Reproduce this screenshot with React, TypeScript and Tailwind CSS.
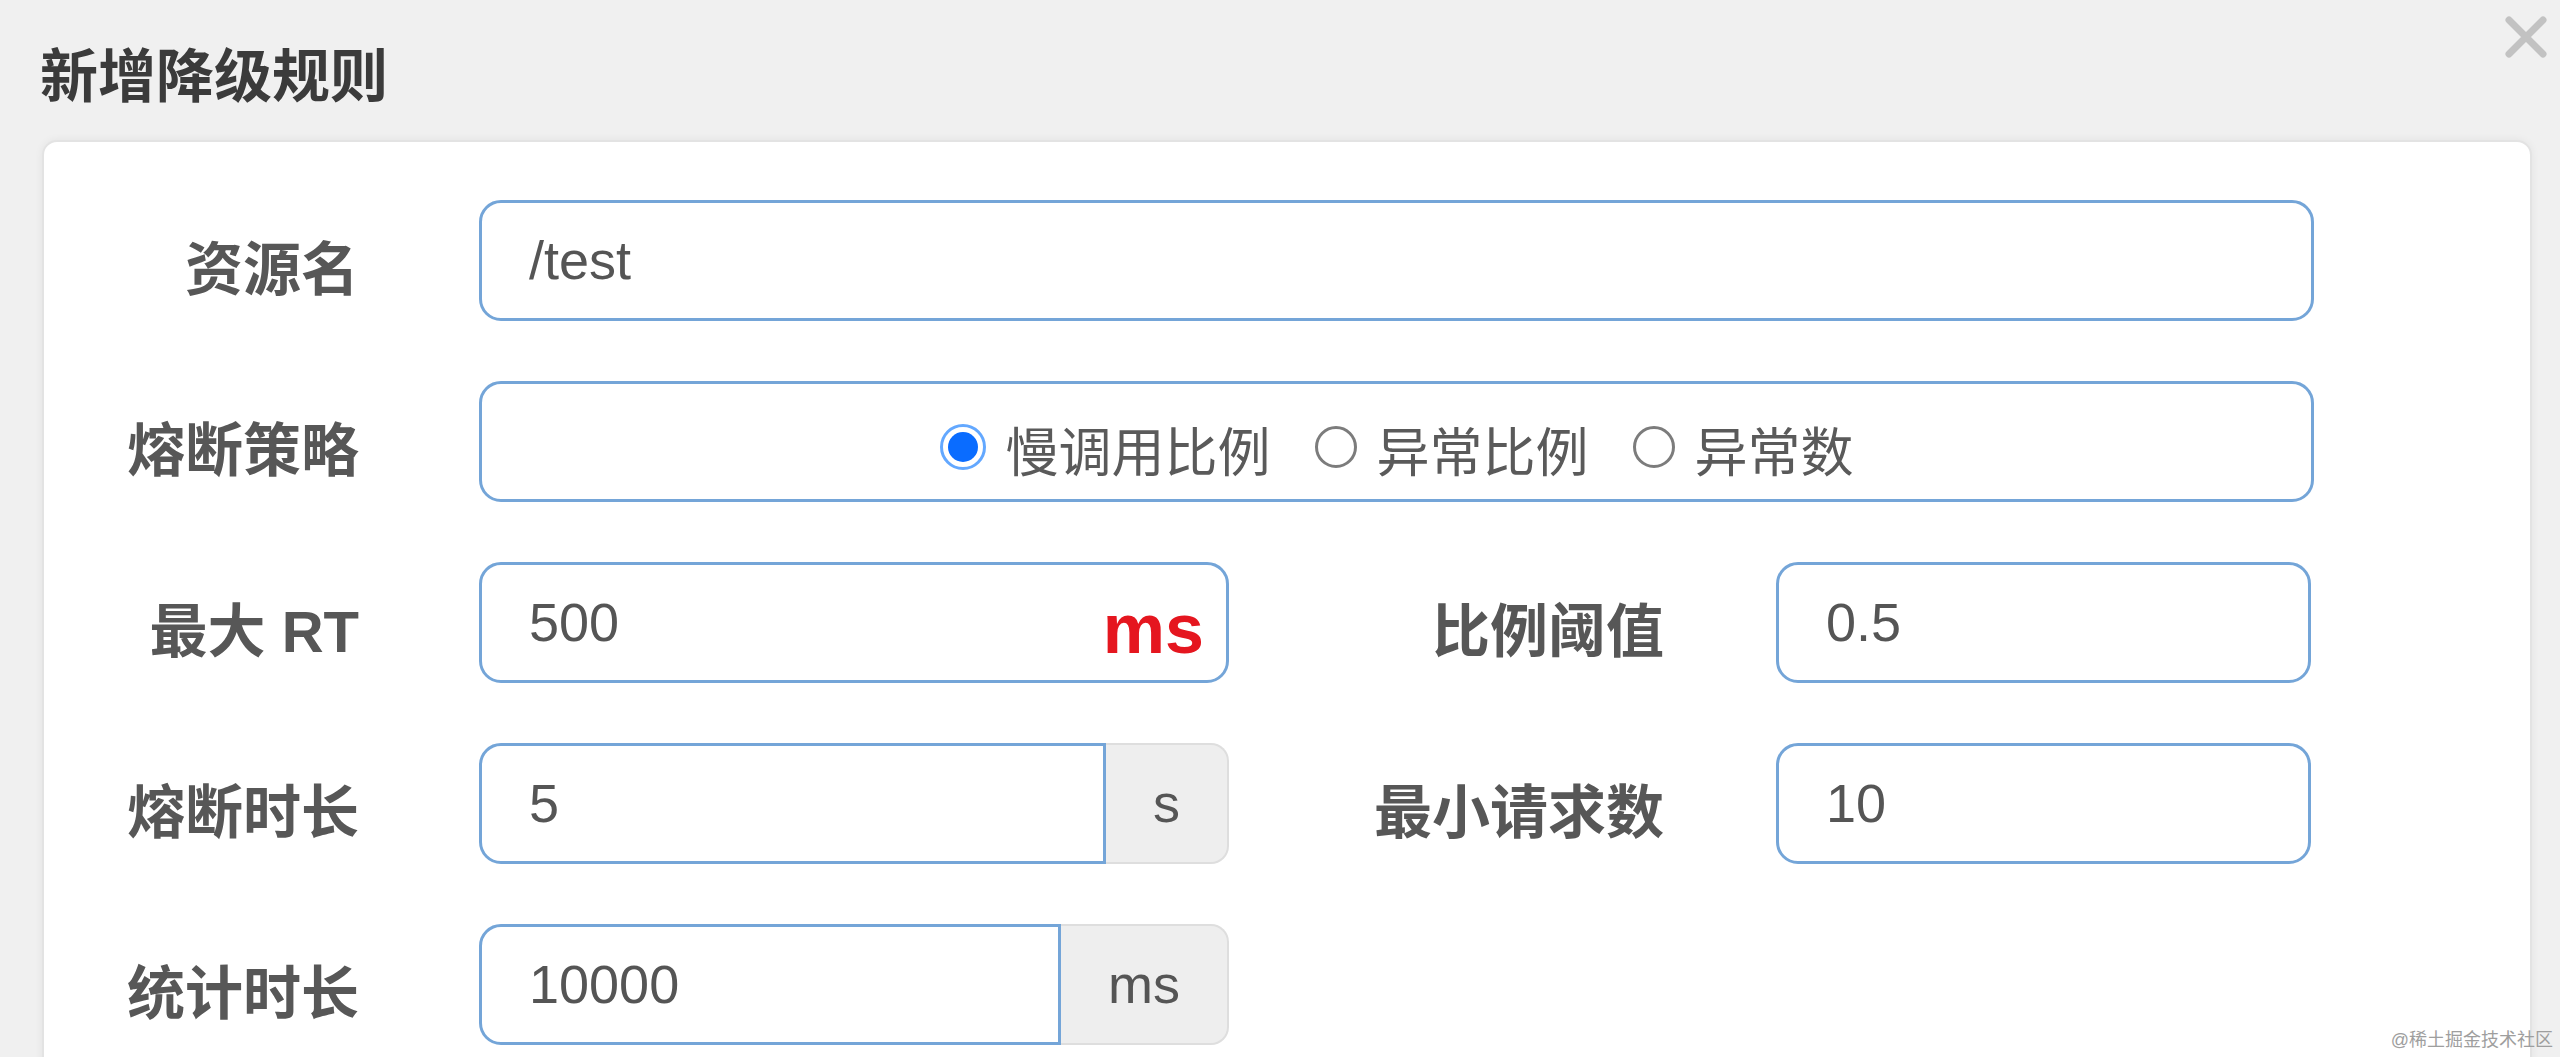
import React from 'react';

const FONT = { fontFamily: '"Liberation Sans", "Noto Sans CJK SC", sans-serif' };

function Label({ text, width }: { text: string; width: string }) {
  return (
    <div className={`${width} shrink-0 pt-[18px] text-right text-[58px] font-bold leading-none text-[#575757]`}>
      {text}
    </div>
  );
}

function Radio({ label, checked }: { label: string; checked?: boolean }) {
  return (
    <div className="flex items-center gap-[20px]">
      {checked ? (
        <span className="flex h-[46px] w-[46px] items-center justify-center rounded-full border-[3px] border-[#63a8ff] bg-white">
          <span className="h-[30px] w-[30px] rounded-full bg-[#0a6cff]" />
        </span>
      ) : (
        <span className="h-[42px] w-[42px] rounded-full border-[3px] border-[#7c7c7c] bg-white" />
      )}
      <span className="pt-[14px] text-[53px] leading-none text-[#5a5a5a]">{label}</span>
    </div>
  );
}

function AddonField({ value, unit, unitWidth }: { value: string; unit: string; unitWidth: string }) {
  return (
    <div className="flex h-[121px] w-[750px] shrink-0">
      <div className="flex flex-1 items-center rounded-l-[22px] border-[3px] border-[#74a5d8] bg-white pl-[47px] text-[54px] text-[#555]">
        {value}
      </div>
      <div className={`${unitWidth} flex shrink-0 items-center justify-center rounded-r-[18px] border-2 border-l-0 border-[#dedede] bg-[#eeeeee] text-[54px] text-[#555]`}>
        {unit}
      </div>
    </div>
  );
}

function TextField({ value, width }: { value: string; width: string }) {
  return (
    <div className={`${width} flex h-[121px] shrink-0 items-center rounded-[22px] border-[3px] border-[#74a5d8] bg-white pl-[47px] text-[54px] text-[#555]`}>
      {value}
    </div>
  );
}

export default function App() {
  return (
    <div className="relative h-[1057px] w-[2560px] overflow-hidden bg-[#f0f0f0]" style={FONT}>
      <div className="flex items-start justify-between pl-[40px] pr-[12px] pt-[15px]">
        <h1 className="mt-[33px] h-[58px] text-[58px] font-bold leading-none text-[#3b3b3b]">新增降级规则</h1>
        <svg width="44" height="44" viewBox="0 0 44 44" className="shrink-0">
          <path d="M5 5 L39 39 M39 5 L5 39" stroke="#c2c2c2" strokeWidth="7" strokeLinecap="round" />
        </svg>
      </div>

      <div className="ml-[42px] mt-[34px] h-[1000px] w-[2490px] rounded-t-[15px] border-2 border-[#e3e3e3] bg-white pt-[58px] shadow-[0_0_8px_rgba(0,0,0,0.06)]">
        <div className="flex flex-col gap-[60px]">
          <div className="flex items-center">
            <Label text="资源名" width="w-[315px]" />
            <div className="ml-[120px]">
              <TextField value="/test" width="w-[1835px]" />
            </div>
          </div>

          <div className="flex items-center">
            <Label text="熔断策略" width="w-[315px]" />
            <div className="ml-[120px] flex h-[121px] w-[1835px] items-center justify-center gap-[44px] rounded-[22px] border-[3px] border-[#74a5d8] bg-white pt-[10px]">
              <Radio label="慢调用比例" checked />
              <Radio label="异常比例" />
              <Radio label="异常数" />
            </div>
          </div>

          <div className="flex items-center">
            <Label text="最大 RT" width="w-[315px]" />
            <div className="ml-[120px] flex h-[121px] w-[750px] shrink-0 items-center justify-between rounded-[22px] border-[3px] border-[#74a5d8] bg-white pl-[47px] pr-[22px] text-[54px] text-[#555]">
              <span>500</span>
              <span className="pt-[12px] text-[70px] font-bold leading-none text-[#e5161f]">ms</span>
            </div>
            <Label text="比例阈值" width="w-[435px]" />
            <div className="ml-[112px]">
              <TextField value="0.5" width="w-[535px]" />
            </div>
          </div>

          <div className="flex items-center">
            <Label text="熔断时长" width="w-[315px]" />
            <div className="ml-[120px]">
              <AddonField value="5" unit="s" unitWidth="w-[123px]" />
            </div>
            <Label text="最小请求数" width="w-[435px]" />
            <div className="ml-[112px]">
              <TextField value="10" width="w-[535px]" />
            </div>
          </div>

          <div className="flex items-center">
            <Label text="统计时长" width="w-[315px]" />
            <div className="ml-[120px]">
              <AddonField value="10000" unit="ms" unitWidth="w-[168px]" />
            </div>
          </div>
        </div>
      </div>

      <div className="absolute bottom-[8px] right-[7px] text-[18px] leading-none text-[#9e9e9e]">@稀土掘金技术社区</div>
    </div>
  );
}
